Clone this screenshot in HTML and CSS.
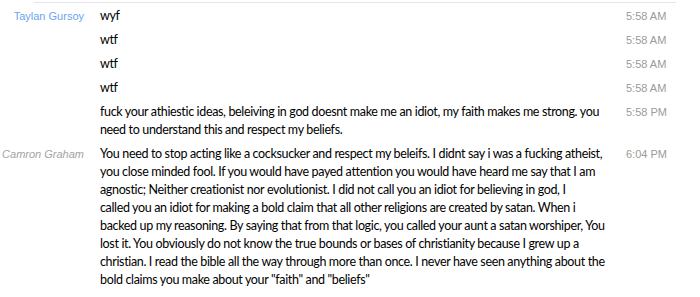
FILE: index.html
```html
<!DOCTYPE html>
<html lang="en">
<head>
    <meta charset="UTF-8">
    <title>Chat log</title>
    <link rel="stylesheet" href="styles.css">
</head>
<body>
    <div class="divider"></div>
    <div class="log">
        <div class="msg">
            <div class="who taylan">Taylan Gursoy</div>
            <div class="text">wyf</div>
            <div class="time">5:58 AM</div>
        </div>
        <div class="msg">
            <div class="who"></div>
            <div class="text">wtf</div>
            <div class="time">5:58 AM</div>
        </div>
        <div class="msg">
            <div class="who"></div>
            <div class="text">wtf</div>
            <div class="time">5:58 AM</div>
        </div>
        <div class="msg">
            <div class="who"></div>
            <div class="text">wtf</div>
            <div class="time">5:58 AM</div>
        </div>
        <div class="msg">
            <div class="who"></div>
            <div class="text">fuck your athiestic ideas, beleiving in god doesnt make me an idiot, my faith makes me strong. you<br>
                need to understand this and respect my beliefs.</div>
            <div class="time">5:58 PM</div>
        </div>
        <div class="msg">
            <div class="who camron">Camron Graham</div>
            <div class="text">You need to stop acting like a cocksucker and respect my beleifs. I didnt say i was a fucking atheist,<br>
                you close minded fool. If you would have payed attention you would have heard me say that I am<br>
                agnostic; Neither creationist nor evolutionist. I did not call you an idiot for believing in god, I<br>
                called you an idiot for making a bold claim that all other religions are created by satan. When i<br>
                backed up my reasoning. By saying that from that logic, you called your aunt a satan worshiper, You<br>
                lost it. You obviously do not know the true bounds or bases of christianity because I grew up a<br>
                christian. I read the bible all the way through more than once. I never have seen anything about the<br>
                bold claims you make about your "faith" and "beliefs"</div>
            <div class="time">6:04 PM</div>
        </div>
    </div>
</body>
</html>
```

FILE: styles.css
```css
body {
    margin: 0;
    background-color: white;
}

.divider {
    margin: 2px 24px 0 34px;
    border-top: 1px solid #e4e4ef;
}

.log {
    padding-top: 1px;
}

.msg {
    display: grid;
    grid-template-columns: 84px 510px 1fr;
    column-gap: 16px;
    padding: 3px 0;
    line-height: 18px;
}

.who {
    text-align: right;
    white-space: nowrap;
    font-family: "Liberation Sans", Arial, sans-serif;
    font-size: 11px;
}

.taylan {
    color: #6ea3f2;
}

.camron {
    color: #a3a3a3;
    font-style: italic;
}

.text {
    white-space: nowrap;
    font-family: "Comic Sans MS", "Lato", sans-serif;
    font-size: 12.5px;
    letter-spacing: -0.35px;
    color: #000;
}

.time {
    font-family: "Liberation Sans", Arial, sans-serif;
    font-size: 11px;
    color: #9a9a9a;
}
```
